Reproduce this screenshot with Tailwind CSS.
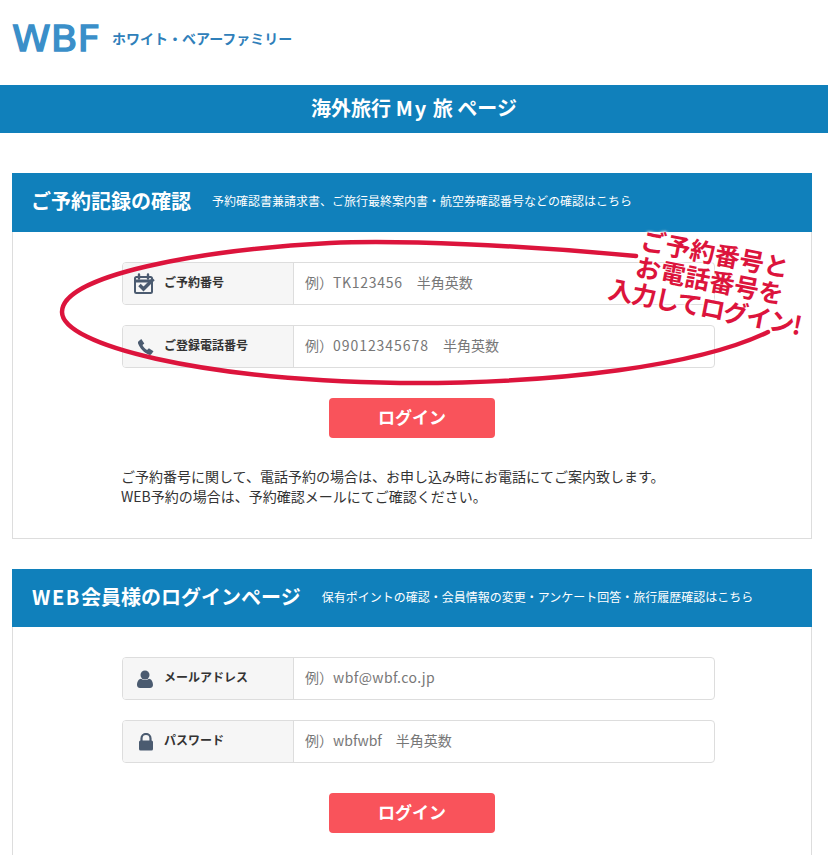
<!DOCTYPE html>
<html lang="ja">
<head>
<meta charset="utf-8">
<script src="https://cdn.jsdelivr.net/npm/@tailwindcss/browser@4"></script>
</head>
<body class="relative h-[855px] overflow-hidden bg-white font-['Noto_Sans_CJK_JP','Noto_Sans',sans-serif] text-[#333]">
  <header class="flex h-[85px] items-start pl-3 pt-[22px]">
    <svg width="90" height="32" viewBox="0 0 90 32" class="shrink-0 overflow-visible">
      <text x="0" y="28.500" textLength="88" lengthAdjust="spacingAndGlyphs" fill="#3a8fc9" stroke="#3a8fc9" stroke-width="1.300" font-family="DejaVu Sans" font-size="35">WBF</text>
    </svg>
    <span class="ml-[10px] mt-[5px] text-[14px] font-bold leading-[22px] text-[#2f80ba]">ホワイト・ベアーファミリー</span>
  </header>
  <div class="flex h-[48px] items-center justify-center bg-[#1080bb] pb-[3px] text-[20px] font-bold text-white"><span>海外旅行 <span class="tracking-[2px]">My</span> 旅 ページ</span></div>

  <main class="w-[812px] pl-3 pt-10">
    <section class="border border-t-0 border-[#ddd]">
      <div class="-mx-px flex h-[59px] items-center bg-[#1080bb] pb-[3px] pl-[19px] text-white">
        <h2 class="text-[20px] font-bold">ご予約記録の確認</h2>
        <p class="ml-[21px] text-[12px]">予約確認書兼請求書、ご旅行最終案内書・航空券確認番号などの確認はこちら</p>
      </div>
      <div class="flex h-[306px] flex-col px-[109px] pt-[30px]">
        <div class="flex h-[43px] w-[593px] overflow-hidden rounded border border-[#ddd]">
          <div class="flex w-[171px] shrink-0 items-center border-r border-[#ddd] bg-[#f6f6f6] pl-[10px] text-[12px] font-bold">
            <svg width="22" height="22" viewBox="0 0 22 22" class="mr-[9px] shrink-0"><rect x="2" y="4" width="17" height="16" rx="1.500" fill="none" stroke="#4b5b70" stroke-width="2"/><path d="M2 8h17" stroke="#4b5b70" stroke-width="3"/><path d="M6 1.500v4M15 1.500v4" stroke="#4b5b70" stroke-width="2.400" stroke-linecap="round"/><path d="M6.500 12l4 4L20.500 6" fill="none" stroke="#4b5b70" stroke-width="3.500"/></svg>
            <span class="-mt-[3px]">ご予約番号</span>
          </div>
          <div class="flex flex-1 items-center pb-[3px] pl-[11px] text-[14px] text-[#777]"><span>例）<span class="tracking-[.7px]">TK123456</span>　半角英数</span></div>
        </div>
        <div class="mt-5 flex h-[43px] w-[593px] overflow-hidden rounded border border-[#ddd]">
          <div class="flex w-[171px] shrink-0 items-center border-r border-[#ddd] bg-[#f6f6f6] pl-[14px] text-[12px] font-bold">
            <svg width="18" height="18" viewBox="0 0 18 18" class="mr-[10px] shrink-0"><path d="M1.500 3.200 4.300 1l3 4.400-1.800 1.700c.8 2 2.500 3.800 4.600 4.800l1.800-1.600 4.600 3-2 2.800c-.6.800-1.600 1-2.600.7C6.800 14.600 2.700 10 1 5.300c-.2-.8 0-1.600.5-2.100z" fill="#4b5b70"/></svg>
            <span class="-ml-px -mt-[3px]">ご登録電話番号</span>
          </div>
          <div class="flex flex-1 items-center pb-[3px] pl-[11px] text-[14px] text-[#777]"><span>例）<span class="tracking-[.95px]">09012345678</span>　半角英数</span></div>
        </div>
        <button class="mx-auto mt-[30px] h-10 w-[166px] shrink-0 rounded bg-[#f9535b] pb-[2px] text-[17px] font-bold text-white">ログイン</button>
        <p class="-ml-px mt-[28px] w-[600px] text-[14px] leading-[20px]">ご予約番号に関して、電話予約の場合は、お申し込み時にお電話にてご案内致します。<br>WEB予約の場合は、予約確認メールにてご確認ください。</p>
      </div>
    </section>

    <section class="mt-[30px] border border-t-0 border-[#ddd]">
      <div class="-mx-px flex h-[58px] items-center bg-[#1080bb] pb-[3px] pl-5 text-white">
        <h2 class="text-[20px] font-bold"><span class="tracking-[1.600px]">WEB</span>会員様のログインページ</h2>
        <p class="ml-[21px] text-[12px]">保有ポイントの確認・会員情報の変更・アンケート回答・旅行履歴確認はこちら</p>
      </div>
      <div class="flex h-[300px] flex-col px-[109px] pt-[30px]">
        <div class="flex h-[43px] w-[593px] overflow-hidden rounded border border-[#ddd]">
          <div class="flex w-[171px] shrink-0 items-center border-r border-[#ddd] bg-[#f6f6f6] pl-[13px] text-[12px] font-bold">
            <svg width="18" height="18" viewBox="0 0 18 18" class="mr-[10px] shrink-0"><circle cx="9" cy="5" r="4.500" fill="#4b5b70"/><path d="M1 15c0-4 2-6 4-6.300 2.400 1.600 5.600 1.600 8 0 2 .3 4 2.300 4 6.300 0 2-1.500 3-3 3H4c-1.500 0-3-1-3-3z" fill="#4b5b70"/></svg>
            <span class="-mt-[3px]">メールアドレス</span>
          </div>
          <div class="flex flex-1 items-center pb-[3px] pl-[11px] text-[14px] text-[#777]"><span>例）<span class="tracking-[.4px]">wbf@wbf.co.jp</span></span></div>
        </div>
        <div class="mt-5 flex h-[43px] w-[593px] overflow-hidden rounded border border-[#ddd]">
          <div class="flex w-[171px] shrink-0 items-center border-r border-[#ddd] bg-[#f6f6f6] pl-[14px] text-[12px] font-bold">
            <svg width="18" height="18" viewBox="0 0 18 18" class="mr-[10px] shrink-0"><path d="M4.500 8V5.500a4.500 4.500 0 0 1 9 0V8" fill="none" stroke="#4b5b70" stroke-width="2.200"/><rect x="2" y="7.500" width="14" height="10" rx="1.500" fill="#4b5b70"/></svg>
            <span class="-ml-px -mt-[3px]">パスワード</span>
          </div>
          <div class="flex flex-1 items-center pb-[3px] pl-[11px] text-[14px] text-[#777]"><span>例）wbfwbf　半角英数</span></div>
        </div>
        <button class="mx-auto mt-[30px] h-10 w-[166px] shrink-0 rounded bg-[#f9535b] pb-[2px] text-[17px] font-bold text-white">ログイン</button>
      </div>
    </section>
  </main>

  <svg class="absolute left-0 top-0" width="828" height="400" viewBox="0 0 828 400" fill="none">
    <path d="M636 256C520 245 400 240 330 243C200 250 62 275 62 312C62 345 200 380 400 383C560 384 700 365 768 332" stroke="#dc143c" stroke-width="4.500" stroke-linecap="round"/>
  </svg>
  <div class="absolute left-[595px] top-[239px] w-[230px] rotate-[11deg] text-center text-[25px] font-bold leading-[27px] text-[#dc143c] [text-shadow:0_0_3px_white,0_0_3px_white,0_0_4px_white]">ご予約番号と<br>お電話番号を<br><span class="tracking-[-1.500px]">入力してログイン!</span></div>
</body>
</html>
